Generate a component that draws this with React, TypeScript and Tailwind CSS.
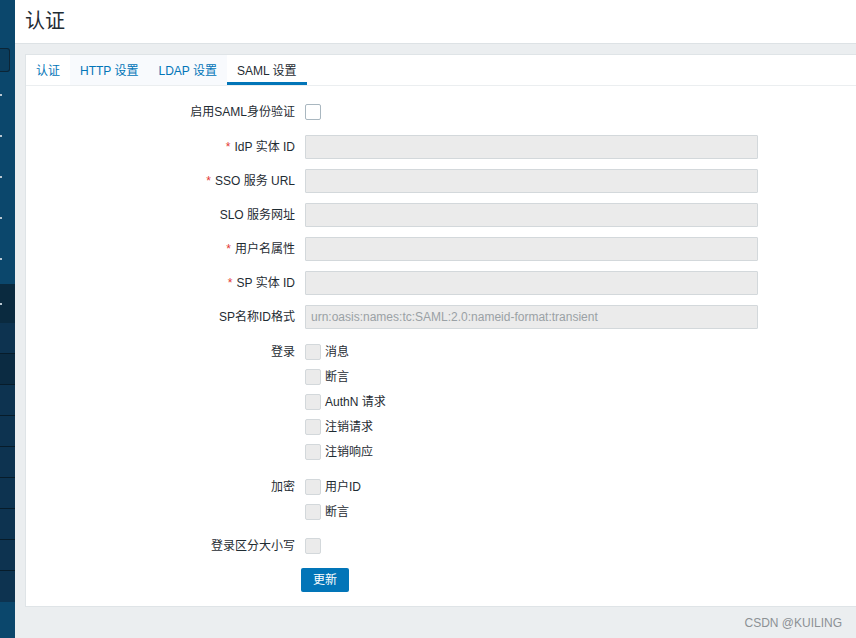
import React from "react";

type Field = {
  label: string;
  required?: boolean;
  value?: string;
};

const textFields: Field[] = [
  { label: "IdP 实体 ID", required: true },
  { label: "SSO 服务 URL", required: true },
  { label: "SLO 服务网址" },
  { label: "用户名属性", required: true },
  { label: "SP 实体 ID", required: true },
  { label: "SP名称ID格式", value: "urn:oasis:names:tc:SAML:2.0:nameid-format:transient" },
];

const tabs = [
  { label: "认证", active: false, tint: false },
  { label: "HTTP 设置", active: false, tint: true },
  { label: "LDAP 设置", active: false, tint: true },
  { label: "SAML 设置", active: true, tint: false },
];

function Sidebar() {
  const rows = Array.from({ length: 9 });
  return (
    <aside className="flex h-full w-[15px] shrink-0 flex-col bg-[#0b476c]">
      <div className="flex h-[284px] flex-col">
        {/* search box, cut off by the viewport */}
        <div className="mt-[48px] h-[24px] w-[10px] rounded-r-[3px] border border-l-0 border-[#0c2536] bg-[#0a3d5d]" />
        <div className="mt-[22px] flex flex-col gap-[39px]">
          {[0, 1, 2, 3, 4].map((i) => (
            <div key={i} className="h-[2px] w-[2px] bg-[#b9c7d1]" />
          ))}
        </div>
      </div>
      <div className="flex h-[39px] items-center bg-[#0a2a3f]">
        <div className="h-[2px] w-[2px] bg-[#b9c7d1]" />
      </div>
      {rows.map((_, i) => (
        <div
          key={i}
          className={`h-[31px] ${i === 1 ? "bg-[#0b2b42]" : "bg-[#0d3350]"} ${i < 8 ? "border-b border-[#071c2a]" : ""}`}
        />
      ))}
      <div className="flex-1 bg-[#0b476c]" />
    </aside>
  );
}

function Checkbox({ enabled = false }: { enabled?: boolean }) {
  return (
    <span
      className={`inline-block h-[16px] w-[16px] shrink-0 rounded-[2px] border ${
        enabled ? "border-[#a9b7c0] bg-white" : "border-[#d3d8db] bg-[#ebebeb]"
      }`}
    />
  );
}

function Label({ text, required }: { text: string; required?: boolean }) {
  return (
    <div className="flex items-center justify-end text-[#1f2c33]">
      {required && <span className="mr-[4px] text-[#e33734]">*</span>}
      {text}
    </div>
  );
}

function CheckList({ items }: { items: string[] }) {
  return (
    <div className="flex flex-col">
      {items.map((item) => (
        <div key={item} className="flex h-[25px] items-center gap-[4px]">
          <Checkbox />
          <span className="text-[#1f2c33]">{item}</span>
        </div>
      ))}
    </div>
  );
}

function SamlForm() {
  return (
    <div className="grid grid-cols-[269px_453px] gap-x-[10px] pt-[14px] text-[12px]">
      {/* enable */}
      <div className="mb-[11px] flex h-[24px] items-center justify-end text-[#1f2c33]">启用SAML身份验证</div>
      <div className="mb-[11px] flex h-[24px] items-center">
        <Checkbox enabled />
      </div>

      {textFields.map((f) => (
        <React.Fragment key={f.label}>
          <div className="mb-[10px] h-[24px]">
            <div className="flex h-full items-center justify-end text-[#1f2c33]">
              {f.required && <span className="mr-[4px] text-[#e33734]">*</span>}
              {f.label}
            </div>
          </div>
          <div className="mb-[10px] flex h-[24px] items-center rounded-[1px] border border-[#d3d8db] bg-[#ebebeb] px-[5px] text-[#9aa1a5]">
            {f.value}
          </div>
        </React.Fragment>
      ))}

      {/* login */}
      <div className="mb-[10px] flex h-[25px] items-center justify-end text-[#1f2c33]">登录</div>
      <div className="mb-[10px]">
        <CheckList items={["消息", "断言", "AuthN 请求", "注销请求", "注销响应"]} />
      </div>

      {/* encryption */}
      <div className="mb-[9px] flex h-[25px] items-center justify-end text-[#1f2c33]">加密</div>
      <div className="mb-[9px]">
        <CheckList items={["用户ID", "断言"]} />
      </div>

      {/* case sensitive */}
      <div className="mb-[10px] flex h-[25px] items-center justify-end text-[#1f2c33]">登录区分大小写</div>
      <div className="mb-[10px] flex h-[25px] items-center">
        <Checkbox />
      </div>

      <div />
      <div>
        <button className="-ml-[4px] h-[24px] w-[48px] rounded-[2px] bg-[#0275b8] text-[12px] text-white">
          更新
        </button>
      </div>
    </div>
  );
}

export default function App() {
  return (
    <div className="flex h-[638px] w-[856px] overflow-hidden font-['Liberation_Sans','Noto_Sans_CJK_SC',sans-serif] text-[12px]">
      <Sidebar />
      <main className="flex min-w-0 flex-1 flex-col bg-[#ebeef0]">
        <header className="flex h-[44px] shrink-0 items-center border-b border-[#dde2e5] bg-white pl-[10px] pb-[2px]">
          <h1 className="text-[20px] leading-none text-[#1f2c33]">认证</h1>
        </header>
        <div className="pl-[10px] pt-[10px]">
          <div className="h-[553px] border border-r-0 border-[#dfe4e7] bg-white">
            <nav className="flex h-[31px] border-b border-[#ebeef0]">
              {tabs.map((t) => (
                <div
                  key={t.label}
                  className={`flex items-center px-[10px] pt-[1px] ${
                    t.active
                      ? "border-b-[3px] border-[#0275b8] pt-[4px] text-[#1f2c33]"
                      : "text-[#0275b8]"
                  } ${t.tint ? "bg-[#f8fafd]" : ""}`}
                >
                  {t.label}
                </div>
              ))}
            </nav>
            <SamlForm />
          </div>
        </div>
        <div className="flex flex-1 items-center justify-end pr-[14px] pt-[1px] text-[12px] text-[#8c9195]">
          CSDN @KUILING
        </div>
      </main>
    </div>
  );
}
